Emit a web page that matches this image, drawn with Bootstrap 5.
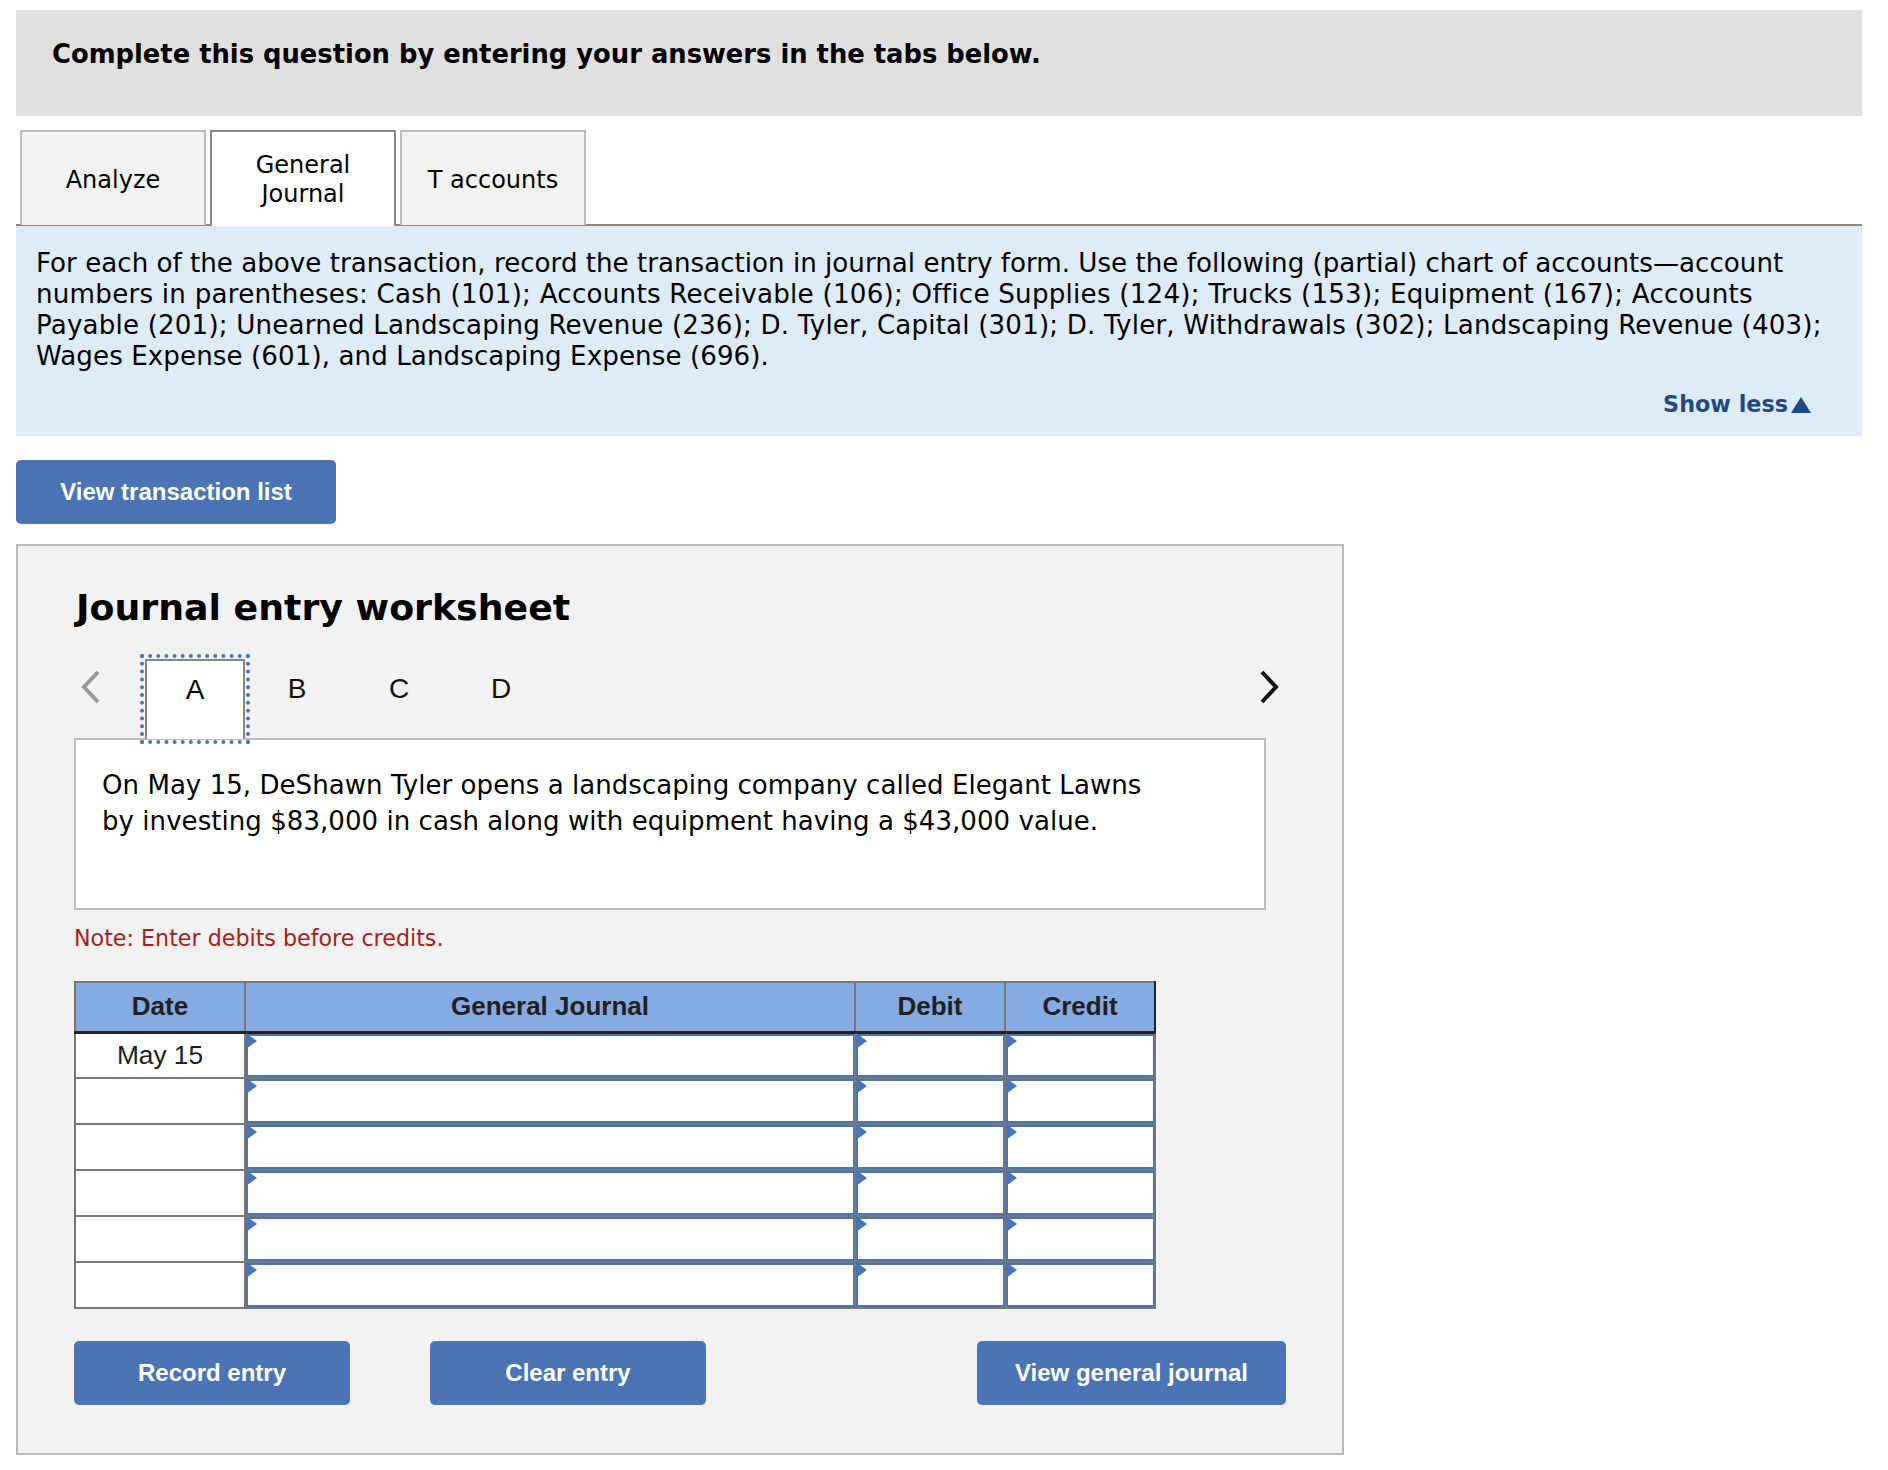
<!DOCTYPE html>
<html lang="en">
<head>
<meta charset="utf-8">
<title>Journal entry worksheet</title>
<link href="https://cdn.jsdelivr.net/npm/bootstrap@5.3.0/dist/css/bootstrap.min.css" rel="stylesheet">
<style>
body{font-family:"DejaVu Sans",sans-serif;color:#000;background:#fff;}
.page-wrap{padding:10px 26px 0 16px;}
.q-head{height:106px;background:#e0e0e0;padding:24px 36px;font-size:25.8px;font-weight:700;line-height:40px;}
.q-tabs{margin-top:14px;padding-left:4px;gap:4px;border-bottom:2px solid #888;height:96px;flex-wrap:nowrap;}
.q-tabs .nav-link{width:186px;height:95px;display:flex;align-items:center;justify-content:center;text-align:center;background:#f2f2f2;border:2px solid #bbb;border-bottom:0;border-radius:0;color:#000;font-size:24px;line-height:29px;padding:3px 0 0;}
.q-tabs .nav-link.active{background:#fff;border-color:#888;height:96px;position:relative;z-index:1;padding-top:1px;}
.q-info{height:210px;background:#deebf8;padding:22px 20px 0;font-size:26.15px;line-height:31px;}
.q-l2{letter-spacing:.24px;}
.q-l3{letter-spacing:.165px;}
.q-l4{letter-spacing:.07px;}
.q-more{margin-top:17px;padding-right:31px;text-align:right;color:#224a82;font-size:22.3px;font-weight:700;line-height:30px;}
.q-more svg{width:20px;height:16px;margin-left:3px;vertical-align:-1px;}
.btn.q-btn{background:#4a74b3;border:0;border-radius:5px;color:#fff;font-family:"Liberation Sans",sans-serif;font-weight:700;font-size:24px;height:64px;padding:0;display:flex;align-items:center;justify-content:center;}
.q-list{width:320px;margin-top:24px;}
.q-panel{width:1328px;height:911px;margin-top:20px;background:#f2f2f2;border:2px solid #bbb;padding:35px 56px 0;}
.q-title{font-family:"DejaVu Sans",sans-serif;font-size:36.3px;font-weight:700;line-height:54px;margin:0 0 0 2px;}
.q-steps{height:94px;margin-top:21px;position:relative;}
.q-arrow{width:24px;height:38px;flex:none;margin-top:12px;margin-left:5px;}
.q-step{width:102px;height:90px;flex:none;text-align:center;font-family:"Liberation Sans",sans-serif;font-size:28px;line-height:34px;padding-top:16px;color:#111;}
.q-step-first{margin-left:42px;}
.q-step-on{width:100px;height:80px;margin-right:1px;background:#fff;border:2px solid #888;border-bottom:0;outline:4px dotted #4a74b3;outline-offset:1px;position:relative;z-index:2;margin-top:3px;padding-top:12px;color:#000;}
.q-arrow-end{margin-left:auto;margin-right:5px;}
.q-case{width:1192px;height:172px;margin-top:-12px;background:#fff;border:2px solid #bbb;padding:27px 26px;font-size:26.04px;line-height:36px;letter-spacing:.04px;position:relative;}
.q-note{margin-top:13px;color:#a5201c;font-size:22.2px;line-height:30px;}
.q-sheet{width:1080px;margin:28px 0 0;table-layout:fixed;border-collapse:collapse;font-family:"Liberation Sans",sans-serif;color:#212121;}
.q-sheet>thead>tr>th{background:#85abe0;height:50px;border:2px solid #777;border-left-color:#222;border-bottom:3px solid #222;padding:0;text-align:center;vertical-align:middle;font-size:26px;font-weight:700;color:#212121;box-shadow:none;}
.q-sheet>thead>tr>th:last-child{border-right-color:#222;}
.q-sheet>thead>tr>th:first-child{border-left-color:#777;}
.q-sheet>tbody>tr>td{height:46px;padding:0;border:2px solid #777;background:#fff;text-align:center;vertical-align:middle;font-size:26.3px;box-shadow:none;}
.q-sheet>tbody>tr>td.q-cell{position:relative;vertical-align:top;}
.q-field{display:block;height:44px;border:solid #4a74b3;border-width:2px 1px 2px 2px;background:#fff;}
.q-sheet>tbody>tr:first-child .q-field{height:43px;}
.q-cell::before{content:"";position:absolute;left:0;top:-1px;border-left:11px solid #4a74b3;border-top:8px solid transparent;border-bottom:8px solid transparent;}
.q-actions{width:1212px;margin-top:32px;}
.q-act{width:276px;}
.q-act-wide{width:309px;margin-left:auto;}
.q-act-2{margin-left:80px;}
</style>
</head>
<body>
<div class="page-wrap">
  <div class="q-head">Complete this question by entering your answers in the tabs below.</div>
  <ul class="nav q-tabs d-flex">
    <li class="nav-item"><a class="nav-link" href="#">Analyze</a></li>
    <li class="nav-item"><a class="nav-link active" href="#">General<br>Journal</a></li>
    <li class="nav-item"><a class="nav-link" href="#">T accounts</a></li>
  </ul>
  <div class="q-info">
    For each of the above transaction, record the transaction in journal entry form. Use the following (partial) chart of accounts—account<br>
    <span class="q-l2">numbers in parentheses: Cash (101); Accounts Receivable (106); Office Supplies (124); Trucks (153); Equipment (167); Accounts</span><br>
    <span class="q-l3">Payable (201); Unearned Landscaping Revenue (236); D. Tyler, Capital (301); D. Tyler, Withdrawals (302); Landscaping Revenue (403);</span><br>
    <span class="q-l4">Wages Expense (601), and Landscaping Expense (696).</span>
    <div class="q-more">Show less<svg viewBox="0 0 20 16"><path d="M10 0 20 16H0Z" fill="#224a82"/></svg></div>
  </div>
  <button type="button" class="btn q-btn q-list">View transaction list</button>
  <div class="q-panel">
    <h2 class="q-title">Journal entry worksheet</h2>
    <div class="q-steps d-flex align-items-start">
      <svg class="q-arrow" viewBox="0 0 24 38"><path d="M19 4 5 19 19 34" fill="none" stroke="#999" stroke-width="4"/></svg>
      <div class="q-step q-step-first q-step-on">A</div>
      <div class="q-step">B</div>
      <div class="q-step">C</div>
      <div class="q-step">D</div>
      <svg class="q-arrow q-arrow-end" viewBox="0 0 24 38"><path d="M5 4 19 19 5 34" fill="none" stroke="#111" stroke-width="4"/></svg>
    </div>
    <div class="q-case">On May 15, DeShawn Tyler opens a landscaping company called Elegant Lawns<br>by investing $83,000 in cash along with equipment having a $43,000 value.</div>
    <div class="q-note">Note: Enter debits before credits.</div>
    <table class="table q-sheet">
      <colgroup><col style="width:170px"><col style="width:610px"><col style="width:150px"><col style="width:150px"></colgroup>
      <thead><tr><th>Date</th><th>General Journal</th><th>Debit</th><th>Credit</th></tr></thead>
      <tbody>
        <tr><td>May 15</td><td class="q-cell"><span class="q-field"></span></td><td class="q-cell"><span class="q-field"></span></td><td class="q-cell"><span class="q-field"></span></td></tr>
        <tr><td></td><td class="q-cell"><span class="q-field"></span></td><td class="q-cell"><span class="q-field"></span></td><td class="q-cell"><span class="q-field"></span></td></tr>
        <tr><td></td><td class="q-cell"><span class="q-field"></span></td><td class="q-cell"><span class="q-field"></span></td><td class="q-cell"><span class="q-field"></span></td></tr>
        <tr><td></td><td class="q-cell"><span class="q-field"></span></td><td class="q-cell"><span class="q-field"></span></td><td class="q-cell"><span class="q-field"></span></td></tr>
        <tr><td></td><td class="q-cell"><span class="q-field"></span></td><td class="q-cell"><span class="q-field"></span></td><td class="q-cell"><span class="q-field"></span></td></tr>
        <tr><td></td><td class="q-cell"><span class="q-field"></span></td><td class="q-cell"><span class="q-field"></span></td><td class="q-cell"><span class="q-field"></span></td></tr>
      </tbody>
    </table>
    <div class="q-actions d-flex">
      <button type="button" class="btn q-btn q-act">Record entry</button>
      <button type="button" class="btn q-btn q-act q-act-2">Clear entry</button>
      <button type="button" class="btn q-btn q-act-wide">View general journal</button>
    </div>
  </div>
</div>
<script src="https://cdn.jsdelivr.net/npm/bootstrap@5.3.0/dist/js/bootstrap.bundle.min.js"></script>
</body>
</html>
